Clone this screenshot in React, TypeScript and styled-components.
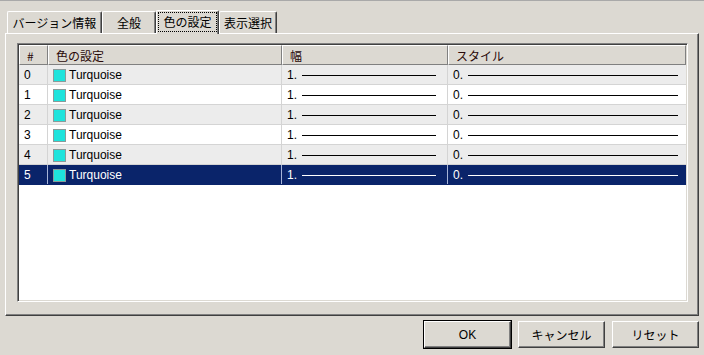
import React from 'react';
import styled, { createGlobalStyle } from 'styled-components';

const FACE = '#dcd9d2';
const SHADOW = '#808080';
const DARK = '#404040';
const SELECTED = '#0a246a';

const GlobalStyle = createGlobalStyle`
  html, body {
    margin: 0;
    padding: 0;
    background: ${FACE};
  }
  body {
    font-family: 'Liberation Sans', 'Noto Sans CJK JP', sans-serif;
    font-size: 12px;
    color: #000;
  }
`;

const Window = styled.div`
  width: 704px;
  height: 355px;
  box-sizing: border-box;
  border-top: 1px solid #a9a9a9;
  padding: 9px 5px 0 5px;
  background: ${FACE};
`;

const TabStrip = styled.div`
  display: flex;
  align-items: flex-end;
  height: 23px;
  padding-left: 2px;
`;

const Tab = styled.div<{ $width: number; $active?: boolean }>`
  box-sizing: border-box;
  width: ${p => p.$width}px;
  height: ${p => (p.$active ? 24 : 22)}px;
  margin-bottom: ${p => (p.$active ? -1 : 0)}px;
  background: ${FACE};
  border-top: 1px solid #fff;
  border-left: 1px solid #fff;
  border-right: 1px solid ${DARK};
  box-shadow: inset -1px 0 0 ${SHADOW};
  border-radius: 2px 2px 0 0;
  display: flex;
  align-items: center;
  justify-content: center;
  padding-bottom: ${p => (p.$active ? 2 : 0)}px;
  font-family: 'Noto Sans CJK JP', sans-serif;
  font-size: 12px;
  position: relative;
  z-index: ${p => (p.$active ? 1 : 0)};
`;

const TabLabel = styled.span<{ $focus?: boolean }>`
  line-height: 16px;
  padding: ${p => (p.$focus ? '1px 4px' : '0 2px')};
  outline: ${p => (p.$focus ? '1px dotted #000' : 'none')};
`;

const Panel = styled.div`
  box-sizing: border-box;
  height: 283px;
  border-top: 1px solid #fff;
  border-left: 1px solid #fff;
  border-right: 1px solid ${DARK};
  border-bottom: 1px solid ${DARK};
  box-shadow: inset -1px -1px 0 ${SHADOW};
  padding: 9px 0 0 11px;
`;

const ListBox = styled.div`
  box-sizing: border-box;
  width: 671px;
  height: 259px;
  background: #fff;
  border-top: 1px solid ${SHADOW};
  border-left: 1px solid ${SHADOW};
  border-right: 1px solid #fff;
  border-bottom: 1px solid #fff;
  box-shadow: inset 1px 1px 0 ${DARK}, inset -1px -1px 0 ${FACE};
  padding: 0 1px 1px 1px;
  overflow: hidden;
`;

const COLS = '29px 234px 166px 238px';

const HeaderRow = styled.div`
  display: grid;
  grid-template-columns: ${COLS};
  height: 21px;
  border-top: 1px solid ${DARK};
  box-sizing: border-box;
`;

const HeaderCell = styled.div`
  box-sizing: border-box;
  background: ${FACE};
  border-top: 1px solid #fff;
  border-left: 1px solid #fff;
  border-right: 1px solid ${SHADOW};
  border-bottom: 1px solid ${SHADOW};
  padding-left: 7px;
  display: flex;
  align-items: center;
  color: #2a0a0a;
  font-family: 'Noto Sans CJK JP', sans-serif;
  font-size: 12px;
`;

const Row = styled.div<{ $shade: 'gray' | 'white' | 'selected' }>`
  display: grid;
  grid-template-columns: ${COLS};
  height: 20px;
  box-sizing: border-box;
  border-bottom: 1px solid ${p => (p.$shade === 'selected' ? SELECTED : '#d4d4d4')};
  background: ${p =>
    p.$shade === 'selected' ? SELECTED : p.$shade === 'gray' ? '#ececec' : '#fff'};
  color: ${p => (p.$shade === 'selected' ? '#fff' : '#000')};
`;

const Cell = styled.div<{ $selected?: boolean; $last?: boolean }>`
  box-sizing: border-box;
  display: flex;
  align-items: center;
  padding-left: 5px;
  padding-top: 1px;
  border-right: 1px solid ${p => (p.$last ? 'transparent' : p.$selected ? '#a6b4d8' : '#d4d4d4')};
  white-space: nowrap;
`;

const Swatch = styled.span`
  width: 11px;
  height: 11px;
  background: #1ee3dc;
  border: 1px solid #8a9a9a;
  margin-right: 3px;
  flex: none;
`;

const Stroke = styled.span<{ $selected?: boolean; $gap: number }>`
  flex: 1;
  height: 1px;
  margin-left: 5px;
  margin-right: ${p => p.$gap}px;
  background: ${p => (p.$selected ? '#fff' : '#000')};
`;

const ButtonBar = styled.div`
  display: flex;
  justify-content: flex-end;
  gap: 7px;
  padding: 5px 0 0 0;
`;

const Button = styled.button<{ $default?: boolean }>`
  box-sizing: border-box;
  width: 87px;
  height: 27px;
  margin: 0;
  padding: 0;
  background: ${FACE};
  border-top: 1px solid #fff;
  border-left: 1px solid #fff;
  border-right: 1px solid ${DARK};
  border-bottom: 1px solid ${DARK};
  box-shadow: inset -1px -1px 0 ${SHADOW};
  outline: ${p => (p.$default ? `1px solid #000` : 'none')};
  outline-offset: 0;
  font-family: 'Liberation Sans', 'Noto Sans CJK JP', sans-serif;
  font-size: 12px;
  color: #000;
`;

const tabs = [
  { label: 'バージョン情報', width: 95 },
  { label: '全般', width: 54 },
  { label: '色の設定', width: 63, active: true },
  { label: '表示選択', width: 58 },
];

const rows = [0, 1, 2, 3, 4, 5];

export default function App() {
  return (
    <>
      <GlobalStyle />
      <Window>
        <TabStrip>
          {tabs.map(t => (
            <Tab key={t.label} $width={t.width} $active={t.active}>
              <TabLabel $focus={t.active}>{t.label}</TabLabel>
            </Tab>
          ))}
        </TabStrip>
        <Panel>
          <ListBox>
            <HeaderRow>
              <HeaderCell>#</HeaderCell>
              <HeaderCell>色の設定</HeaderCell>
              <HeaderCell>幅</HeaderCell>
              <HeaderCell>スタイル</HeaderCell>
            </HeaderRow>
            {rows.map(i => {
              const selected = i === 5;
              const shade = selected ? 'selected' : i % 2 === 0 ? 'gray' : 'white';
              return (
                <Row key={i} $shade={shade}>
                  <Cell $selected={selected}>{i}</Cell>
                  <Cell $selected={selected}>
                    <Swatch />
                    Turquoise
                  </Cell>
                  <Cell $selected={selected}>
                    1.
                    <Stroke $selected={selected} $gap={11} />
                  </Cell>
                  <Cell $selected={selected} $last>
                    0.
                    <Stroke $selected={selected} $gap={7} />
                  </Cell>
                </Row>
              );
            })}
          </ListBox>
        </Panel>
        <ButtonBar>
          <Button $default>OK</Button>
          <Button>キャンセル</Button>
          <Button>リセット</Button>
        </ButtonBar>
      </Window>
    </>
  );
}
